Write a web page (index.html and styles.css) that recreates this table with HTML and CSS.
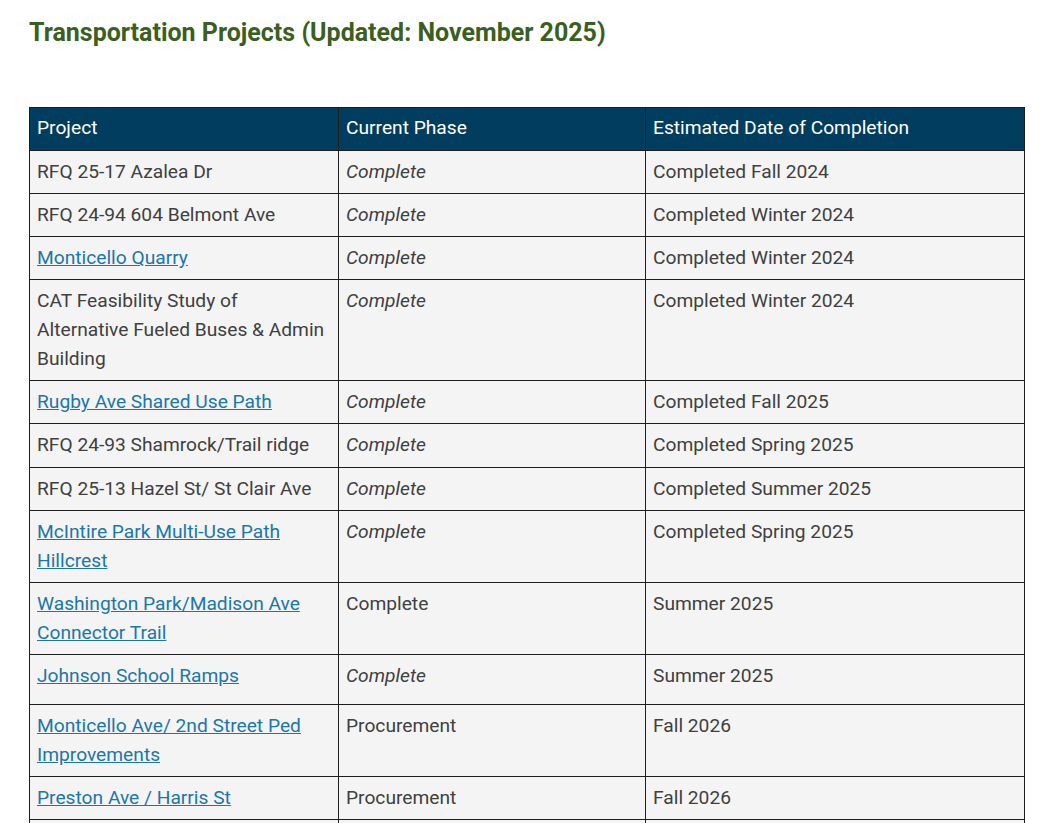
FILE: index.html
```html
<!DOCTYPE html>
<html lang="en">
<head>
<meta charset="utf-8">
<title>Transportation Projects</title>
<link rel="stylesheet" href="styles.css">
</head>
<body>
<div class="page">
  <h2 class="title">Transportation Projects (Updated: November 2025)</h2>
  <table class="projects">
    <colgroup>
      <col class="c1"><col class="c2"><col class="c3">
    </colgroup>
    <thead>
      <tr><th>Project</th><th>Current Phase</th><th>Estimated Date of Completion</th></tr>
    </thead>
    <tbody>
      <tr><td>RFQ 25-17 Azalea Dr</td><td><em>Complete</em></td><td>Completed Fall 2024</td></tr>
      <tr><td>RFQ 24-94 604 Belmont Ave</td><td><em>Complete</em></td><td>Completed Winter 2024</td></tr>
      <tr><td><a href="#">Monticello Quarry</a></td><td><em>Complete</em></td><td>Completed Winter 2024</td></tr>
      <tr><td>CAT Feasibility Study of Alternative Fueled Buses &amp; Admin Building</td><td><em>Complete</em></td><td>Completed Winter 2024</td></tr>
      <tr><td><a href="#">Rugby Ave Shared Use Path</a></td><td><em>Complete</em></td><td>Completed Fall 2025</td></tr>
      <tr><td>RFQ 24-93 Shamrock/Trail ridge</td><td><em>Complete</em></td><td>Completed Spring 2025</td></tr>
      <tr><td>RFQ 25-13 Hazel St/ St Clair Ave</td><td><em>Complete</em></td><td>Completed Summer 2025</td></tr>
      <tr><td><a href="#">McIntire Park Multi-Use Path Hillcrest</a></td><td><em>Complete</em></td><td>Completed Spring 2025</td></tr>
      <tr><td><a href="#">Washington Park/Madison Ave Connector Trail</a></td><td>Complete</td><td>Summer 2025</td></tr>
      <tr class="tall"><td><a href="#">Johnson School Ramps</a></td><td><em>Complete</em></td><td>Summer 2025</td></tr>
      <tr><td><a href="#">Monticello Ave/ 2nd Street Ped Improvements</a></td><td>Procurement</td><td>Fall 2026</td></tr>
      <tr><td><a href="#">Preston Ave / Harris St</a></td><td>Procurement</td><td>Fall 2026</td></tr>
      <tr><td>&nbsp;</td><td>&nbsp;</td><td>&nbsp;</td></tr>
    </tbody>
  </table>
</div>
</body>
</html>
```
FILE: styles.css
```css
html, body {
  margin: 0;
  padding: 0;
  background: #ffffff;
}
body {
  font-family: Roboto, "Liberation Sans", Arial, sans-serif;
  color: #404040;
}
.page {
  padding: 18px 19px 0 29px;
}
.title {
  margin: 0 0 59px;
  font-size: 25px;
  line-height: 30px;
  font-weight: 700;
  color: #3b5e21;
}
.projects {
  border-collapse: collapse;
  table-layout: fixed;
  width: 995px;
  font-size: 19.2px;
  line-height: 29px;
}
.c1 { width: 309px; }
.c2 { width: 307px; }
.c3 { width: 379px; }
.projects th,
.projects td {
  border: 1px solid #1e1e1e;
  padding: 6px 12px 7.1px 7px;
  text-align: left;
  vertical-align: top;
}
.projects th {
  background: #013d5e;
  color: #ffffff;
  font-weight: 400;
  padding-top: 5px;
  padding-bottom: 8px;
}
.projects td {
  background: #f4f4f4;
}
.projects tr.tall {
  height: 50px;
}
.projects a {
  color: #1b77a8;
  text-decoration: underline;
}
.projects em {
  font-style: italic;
}
```
